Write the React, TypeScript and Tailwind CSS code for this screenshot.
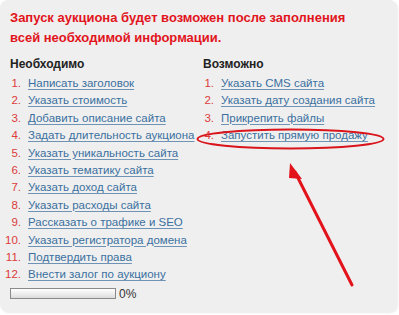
import { FC, ReactElement } from "react";

const required: string[] = [
  "Написать заголовок",
  "Указать стоимость",
  "Добавить описание сайта",
  "Задать длительность аукциона",
  "Указать уникальность сайта",
  "Указать тематику сайта",
  "Указать доход сайта",
  "Указать расходы сайта",
  "Рассказать о трафике и SEO",
  "Указать регистратора домена",
  "Подтвердить права",
  "Внести залог по аукциону",
];

const optional: string[] = [
  "Указать CMS сайта",
  "Указать дату создания сайта",
  "Прикрепить файлы",
  "Запустить прямую продажу",
];

const StepList: FC<{ title: string; items: string[] }> = ({
  title,
  items,
}): ReactElement => (
  <div>
    <h4 className="text-[12px] font-bold leading-[18px] text-[#222]">{title}</h4>
    <ul className="mt-[2px]">
      {items.map((item, i) => (
        <li key={item} className="flex h-[17.4px] items-center text-[11.5px]">
          <span className="-ml-[5px] w-[16px] shrink-0 text-right text-[#dc3b3b] whitespace-nowrap">
            {i + 1}.
          </span>
          <a
            href="#"
            className="ml-[7px] whitespace-nowrap text-[#3a6f9f] underline decoration-[#6f93b5] underline-offset-2"
          >
            {item}
          </a>
        </li>
      ))}
    </ul>
  </div>
);

const App: FC = (): ReactElement => {
  return (
    <div className="h-[315px] w-[399px] bg-white font-['Liberation_Sans',Arial,sans-serif]">
      <div className="relative h-[312px] w-[397px] rounded-[8px] bg-[#efefef] px-[10px] pt-[8px] shadow-[1px_1px_2px_rgba(0,0,0,0.08)]">
        <p className="text-[13px] font-bold leading-[20px] text-[#e2141c]">
          Запуск аукциона будет возможен после заполнения
          <br />
          всей необходимой информации.
        </p>

        <div className="mt-[7px] flex">
          <div className="w-[193px]">
            <StepList title="Необходимо" items={required} />
            <div className="mt-[1px] flex items-center">
              <div className="h-[11px] w-[106px] border border-[#8a8a8a] bg-gradient-to-b from-white to-[#dcdcdc]" />
              <span className="ml-[3px] text-[12px] text-[#333]">0%</span>
            </div>
          </div>
          <div>
            <StepList title="Возможно" items={optional} />
          </div>
        </div>

        <svg
          className="pointer-events-none absolute left-0 top-0"
          width="399"
          height="315"
          viewBox="0 0 399 315"
        >
          <ellipse
            cx="290.5"
            cy="139"
            rx="93"
            ry="9.5"
            fill="none"
            stroke="#d9141b"
            strokeWidth="2"
          />
          <line
            x1="352"
            y1="285"
            x2="295"
            y2="172"
            stroke="#e3131b"
            strokeWidth="3"
            strokeLinecap="round"
          />
          <polygon points="290,163 302,179 289,178" fill="#e3131b" />
        </svg>
      </div>
    </div>
  );
};

export default App;
